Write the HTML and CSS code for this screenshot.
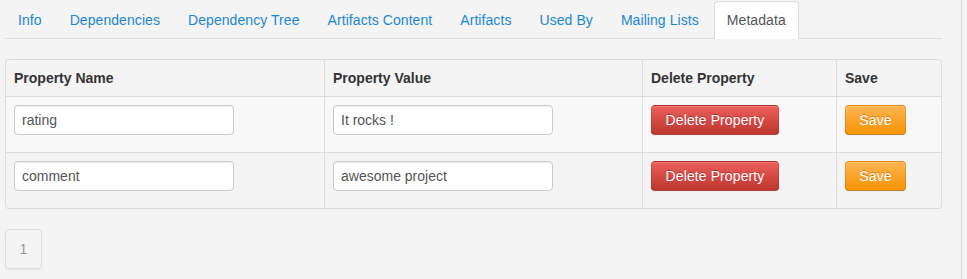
FILE: index.html
```html
<!DOCTYPE html>
<html lang="en">
<head>
    <meta charset="UTF-8">
    <meta name="viewport" content="width=device-width, initial-scale=1.0">
    <title>Metadata</title>
    <link rel="stylesheet" href="styles.css">
</head>

<body>
  <div class="page">
    <!-- tabs -->
    <ul class="nav-tabs">
      <li><a href="#">Info</a></li>
      <li><a href="#">Dependencies</a></li>
      <li><a href="#">Dependency Tree</a></li>
      <li><a href="#">Artifacts Content</a></li>
      <li><a href="#">Artifacts</a></li>
      <li><a href="#">Used By</a></li>
      <li><a href="#">Mailing Lists</a></li>
      <li class="active"><a href="#">Metadata</a></li>
    </ul>

    <!-- metadata table -->
    <table class="table-meta">
      <thead>
        <tr>
          <th class="col-name">Property Name</th>
          <th class="col-value">Property Value</th>
          <th class="col-delete">Delete Property</th>
          <th>Save</th>
        </tr>
      </thead>
      <tbody>
        <tr>
          <td><input type="text" value="rating"></td>
          <td><input type="text" value="It rocks !"></td>
          <td><button class="btn btn-danger">Delete Property</button></td>
          <td><button class="btn btn-warning">Save</button></td>
        </tr>
        <tr>
          <td><input type="text" value="comment"></td>
          <td><input type="text" value="awesome project"></td>
          <td><button class="btn btn-danger">Delete Property</button></td>
          <td><button class="btn btn-warning">Save</button></td>
        </tr>
      </tbody>
    </table>

    <!-- pages -->
    <div class="pagination">
      <span class="page-num">1</span>
    </div>
  </div>
</body>
</html>
```

FILE: styles.css
```css
html, body {
  margin: 0;
  background-color: #f4f4f4;
}

body {
  font-family: "Liberation Sans", Arial, Helvetica, sans-serif;
  font-size: 14px;
  line-height: 20px;
  color: #333;
}

.page {
  width: 937px;
  padding: 1px 19px 0 5px;
  min-height: 278px;
  border-right: 1px solid #dedede;
}

/* tabs */
.nav-tabs {
  display: flex;
  list-style: none;
  margin: 0 0 20px 0;
  padding: 0;
  border-bottom: 1px solid #ddd;
}
.nav-tabs li {
  margin: 0 2px -1px 0;
}
.nav-tabs a {
  display: block;
  padding: 8px 12px;
  line-height: 20px;
  letter-spacing: 0.07px;
  border: 1px solid transparent;
  border-radius: 4px 4px 0 0;
  color: #1c87d0;
  text-decoration: none;
}
.nav-tabs .active a {
  background-color: #fff;
  border-color: #ddd #ddd transparent;
  color: #555;
}

/* table */
.table-meta {
  width: 937px;
  table-layout: fixed;
  border-collapse: separate;
  border-spacing: 0;
  border: 1px solid #ddd;
  border-left: 0;
  border-radius: 4px;
  margin-bottom: 20px;
}
.table-meta th,
.table-meta td {
  box-sizing: border-box;
  padding: 8px;
  text-align: left;
  vertical-align: top;
  line-height: 20px;
  border-left: 1px solid #ddd;
}
.table-meta td {
  border-top: 1px solid #ddd;
}
.table-meta th {
  font-weight: bold;
  color: #333;
}
.col-name { width: 319px; }
.col-value { width: 318px; }
.col-delete { width: 194px; }

.table-meta tbody tr:nth-child(odd) td {
  background-color: #f8f8f8;
}
.table-meta tbody tr:last-child td:first-child {
  border-bottom-left-radius: 4px;
}
.table-meta thead th:first-child {
  border-top-left-radius: 4px;
}

input {
  display: inline-block;
  vertical-align: top;
  box-sizing: border-box;
  width: 220px;
  height: 30px;
  margin: 0 0 9px 0;
  padding: 4px 7px;
  font-family: inherit;
  font-size: 14px;
  line-height: 20px;
  color: #555;
  background-color: #fff;
  border: 1px solid #ccc;
  border-radius: 4px;
  box-shadow: inset 0 1px 1px rgba(0, 0, 0, 0.075);
  outline: none;
}

.btn {
  display: inline-block;
  vertical-align: top;
  box-sizing: border-box;
  height: 30px;
  padding: 4px 0;
  text-align: center;
  font-family: inherit;
  font-size: 14px;
  line-height: 20px;
  letter-spacing: 0.1px;
  color: #fff;
  text-shadow: 0 -1px 0 rgba(0, 0, 0, 0.25);
  border: 1px solid rgba(0, 0, 0, 0.1);
  border-bottom-color: rgba(0, 0, 0, 0.25);
  border-radius: 4px;
  box-shadow: inset 0 1px 0 rgba(255, 255, 255, 0.2), 0 1px 2px rgba(0, 0, 0, 0.05);
  cursor: pointer;
}
.btn-danger {
  width: 128px;
  background-color: #da4f49;
  background-image: linear-gradient(to bottom, #ee5f5b, #bd362f);
}
.btn-warning {
  width: 61px;
  background-color: #faa732;
  background-image: linear-gradient(to bottom, #fbb450, #f89406);
}

/* pagination */
.pagination {
  display: flex;
}
.page-num {
  display: block;
  box-sizing: border-box;
  width: 37px;
  height: 40px;
  padding: 9px 0;
  text-align: center;
  line-height: 20px;
  color: #999;
  border: 1px solid #ddd;
  border-radius: 4px;
  box-shadow: 0 1px 2px rgba(0, 0, 0, 0.05);
}
```
